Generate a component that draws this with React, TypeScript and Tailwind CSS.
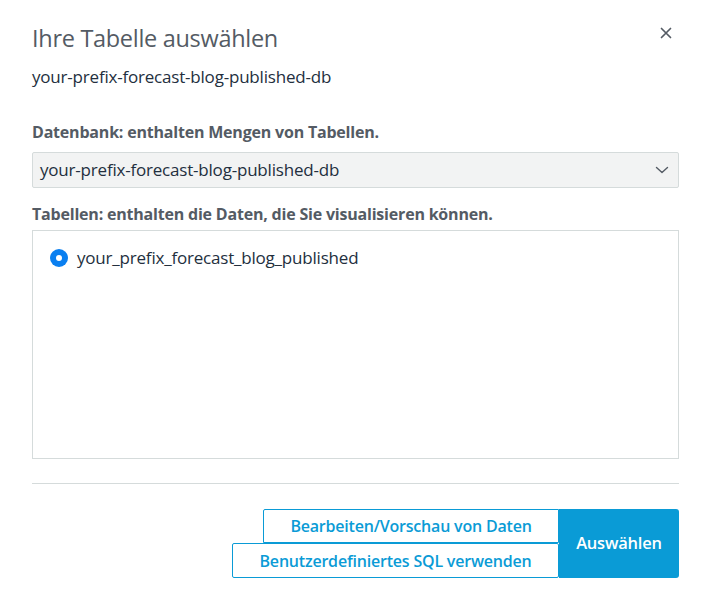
import React from "react";

export default function App() {
  return (
    <div className="w-[718px] h-[600px] bg-white text-[#545b64]" style={{ fontFamily: '"Open Sans", "Noto Sans", sans-serif' }}>
      <div className="pl-[32px] pr-[39px] pt-[22px]">
        <div className="flex items-start justify-between">
          <h1 className="text-[23.5px] leading-[32px] font-normal text-[#545b64] tracking-[-0.3px]">Ihre Tabelle auswählen</h1>
          <button className="mt-[5px] mr-[7px] text-[#545b64]" aria-label="close">
            <svg width="12" height="12" viewBox="0 0 12 12" fill="none" stroke="currentColor" strokeWidth="1.7" strokeLinecap="round">
              <path d="M1.5 1.5 L10.5 10.5 M10.5 1.5 L1.5 10.5" />
            </svg>
          </button>
        </div>
        <div className="mt-[12px] text-[17px] leading-[22px] text-[#232f3e] tracking-[-0.2px]">your-prefix-forecast-blog-published-db</div>

        <div className="mt-[34px] text-[16px] leading-[20px] font-bold text-[#545b64] tracking-[-0.2px]">Datenbank: enthalten Mengen von Tabellen.</div>
        <div className="mt-[10px] h-[36px] bg-[#f2f3f3] border border-[#d5dbdb] rounded-[2px] flex items-center justify-between pl-[7px] pr-[8px]">
          <span className="text-[17px] text-[#232f3e] tracking-[-0.2px]">your-prefix-forecast-blog-published-db</span>
          <svg width="16" height="16" viewBox="0 0 16 16" fill="none" stroke="#545b64" strokeWidth="1.4" strokeLinecap="round" strokeLinejoin="round">
            <path d="M2.5 5.5 L8 10.5 L13.5 5.5" />
          </svg>
        </div>

        <div className="mt-[16px] text-[16px] leading-[20px] font-bold text-[#545b64] tracking-[-0.2px]">Tabellen: enthalten die Daten, die Sie visualisieren können.</div>
        <div className="mt-[6px] h-[229px] border border-[#d5dbdb] bg-white pt-[15px] pl-[17px]">
          <label className="flex items-center gap-[9px]">
            <span className="w-[18px] h-[18px] rounded-full bg-[#0a7ff0] flex items-center justify-center">
              <span className="w-[6px] h-[6px] rounded-full bg-white" />
            </span>
            <span className="text-[17px] leading-[23px] text-[#232f3e] tracking-[-0.2px]">your_prefix_forecast_blog_published</span>
          </label>
        </div>

        <div className="mt-[24px] border-t border-[#d5dbdb]" />

        <div className="mt-[25px] flex justify-end">
          <div className="flex flex-col items-end">
            <button className="h-[34px] w-[296px] border border-[#0a9bd6] bg-white text-[#0a9bd6] text-[16px] font-semibold rounded-tl-[2px] tracking-[-0.2px]">Bearbeiten/Vorschau von Daten</button>
            <button className="h-[35px] w-[327px] border border-[#0a9bd6] bg-white text-[#0a9bd6] text-[16px] font-semibold rounded-[2px] tracking-[-0.2px]">Benutzerdefiniertes SQL verwenden</button>
          </div>
          <button className="w-[120px] h-[69px] bg-[#0a9bd6] text-white text-[16.5px] font-semibold rounded-r-[3px] tracking-[-0.2px]">Auswählen</button>
        </div>
      </div>
    </div>
  );
}
